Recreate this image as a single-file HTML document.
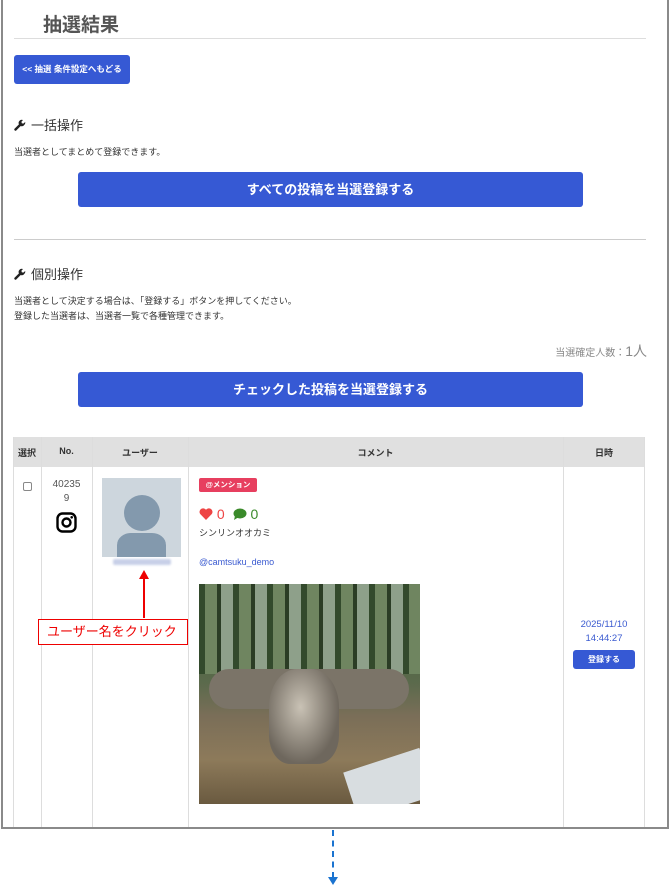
<!DOCTYPE html>
<html><head><meta charset="utf-8"><style>
*{box-sizing:border-box;margin:0;padding:0}
body{width:670px;height:896px;background:#fff;font-family:"Liberation Sans","Noto Sans CJK JP",sans-serif;color:#333;position:relative;overflow:hidden}
.frame{position:absolute;left:1px;top:-2px;width:668px;height:831px;border:2px solid #8a8a8a;overflow:hidden}
.in{position:absolute;left:-3px;top:0;width:668px;height:831px}
.abs{position:absolute}
.btn{background:#3659d4;color:#fff;border-radius:3px;text-align:center;font-weight:bold}
.t{font-size:9px;color:#333}
.vl{position:absolute;background:#ddd;width:1px}
</style></head><body>
<div class="frame"><div class="in">
 <div class="abs" style="left:43px;top:10px;font-size:19px;font-weight:bold;color:#555">抽選結果</div>
 <div class="abs" style="left:14px;top:38px;width:632px;height:1px;background:#ddd"></div>
 <div class="abs btn" style="left:14px;top:55px;width:116px;height:29px;line-height:29px;font-size:8.5px">&lt;&lt; 抽選 条件設定へもどる</div>
 <div class="abs" style="left:14px;top:115px;font-size:13px;color:#333"><svg width="12" height="12" viewBox="0 0 12 12" style="vertical-align:-1px;margin-right:5px"><path d="M1.5 10.5 L6 6" stroke="#222" stroke-width="2.4" stroke-linecap="round"/><path d="M5 5.5 A3.2 3.2 0 0 0 9.5 6.8 L11 5 A3.2 3.2 0 0 0 11.2 3 L9.3 4.6 L7.8 4.2 L7.4 2.7 L9 1 A3.2 3.2 0 0 0 5 5.5Z" fill="#222"/></svg>一括操作</div>
 <div class="abs t" style="left:14px;top:145px">当選者としてまとめて登録できます。</div>
 <div class="abs btn" style="left:78px;top:172px;width:505px;height:35px;line-height:35px;font-size:13px">すべての投稿を当選登録する</div>
 <div class="abs" style="left:14px;top:239px;width:632px;height:1px;background:#ccc"></div>
 <div class="abs" style="left:14px;top:264px;font-size:13px;color:#333"><svg width="12" height="12" viewBox="0 0 12 12" style="vertical-align:-1px;margin-right:5px"><path d="M1.5 10.5 L6 6" stroke="#222" stroke-width="2.4" stroke-linecap="round"/><path d="M5 5.5 A3.2 3.2 0 0 0 9.5 6.8 L11 5 A3.2 3.2 0 0 0 11.2 3 L9.3 4.6 L7.8 4.2 L7.4 2.7 L9 1 A3.2 3.2 0 0 0 5 5.5Z" fill="#222"/></svg>個別操作</div>
 <div class="abs t" style="left:14px;top:294px;line-height:15px">当選者として決定する場合は、「登録する」ボタンを押してください。<br>登録した当選者は、当選者一覧で各種管理できます。</div>
 <div class="abs" style="right:21px;top:341px;font-size:10px;color:#888">当選確定人数：<span style="font-size:14px">1人</span></div>
 <div class="abs btn" style="left:78px;top:372px;width:505px;height:35px;line-height:35px;font-size:13px">チェックした投稿を当選登録する</div>
 <div class="abs" style="left:13px;top:437px;width:632px;height:30px;background:#e0e0e0"></div>
 <div class="abs" style="left:13px;top:437px;width:632px;height:400px;border-left:1px solid #ddd;border-right:1px solid #ddd"></div>
 <div class="vl" style="left:41px;top:437px;height:400px"></div>
 <div class="vl" style="left:92px;top:437px;height:400px"></div>
 <div class="vl" style="left:188px;top:437px;height:400px"></div>
 <div class="vl" style="left:563px;top:437px;height:400px"></div>
 <div class="abs" style="left:13px;top:446px;width:28px;text-align:center;font-size:9px;font-weight:bold">選択</div>
 <div class="abs" style="left:41px;top:446px;width:51px;text-align:center;font-size:9px;font-weight:bold">No.</div>
 <div class="abs" style="left:92px;top:446px;width:96px;text-align:center;font-size:9px;font-weight:bold">ユーザー</div>
 <div class="abs" style="left:188px;top:446px;width:375px;text-align:center;font-size:9px;font-weight:bold">コメント</div>
 <div class="abs" style="left:563px;top:446px;width:82px;text-align:center;font-size:9px;font-weight:bold">日時</div>
 <div class="abs" style="left:23px;top:482px;width:9px;height:9px;border:1px solid #888;border-radius:2px"></div>
 <div class="abs" style="left:41px;top:478px;width:51px;text-align:center;font-size:10px;color:#555;line-height:14px">40235<br>9</div>
 <svg class="abs" style="left:56px;top:512px" width="21" height="21" viewBox="0 0 21 21"><rect x="1.5" y="1.5" width="18" height="18" rx="5" fill="none" stroke="#000" stroke-width="2.4"/><circle cx="10.5" cy="10.5" r="4" fill="none" stroke="#000" stroke-width="2.4"/><circle cx="15.7" cy="5.3" r="1.3"/></svg>
 <div class="abs" style="left:102px;top:478px;width:79px;height:79px;background:#cdd6dd;overflow:hidden"><div class="abs" style="left:22px;top:17px;width:36px;height:36px;border-radius:50%;background:#8399ad"></div><div class="abs" style="left:15px;top:53px;width:49px;height:40px;border-radius:14px 14px 0 0;background:#8399ad;border-top:2px solid #cdd6dd"></div></div>
 <div class="abs" style="left:113px;top:559px;width:58px;height:6px;background:#c8d0e8;border-radius:2px;filter:blur(1px)"></div>
 <div class="abs" style="left:143px;top:575px;width:2px;height:43px;background:#e00"></div>
 <div class="abs" style="left:139px;top:570px;width:0;height:0;border-left:5px solid transparent;border-right:5px solid transparent;border-bottom:9px solid #e00"></div>
 <div class="abs" style="left:38px;top:619px;width:150px;height:26px;border:1px solid #e00;background:#fff;color:#e00;font-size:13px;line-height:24px;padding-left:8px">ユーザー名をクリック</div>
 <div class="abs" style="left:199px;top:478px;width:58px;height:14px;background:#e73f5f;border-radius:2px;color:#fff;font-size:7.5px;font-weight:bold;text-align:center;line-height:14px">@メンション</div>
 <div class="abs" style="left:199px;top:506px;font-size:14px;color:#e44"><svg width="14" height="12" viewBox="0 0 14 12" style="vertical-align:-1px"><path d="M7 12 L1.2 6 A3.3 3.3 0 0 1 7 1.8 A3.3 3.3 0 0 1 12.8 6Z" fill="#e44"/></svg> 0 <svg width="14" height="12" viewBox="0 0 14 12" style="vertical-align:-1px;margin-left:4px"><ellipse cx="7" cy="5.5" rx="6.5" ry="5" fill="#3a8a2a"/><path d="M2 8 L1 12 L5 9.5Z" fill="#3a8a2a"/></svg><span style="color:#3a8a2a"> 0</span></div>
 <div class="abs t" style="left:199px;top:526px">シンリンオオカミ</div>
 <div class="abs" style="left:199px;top:557px;font-size:9px;color:#3a5ad0">@camtsuku_demo</div>
 <div class="abs" style="left:199px;top:584px;width:221px;height:220px;overflow:hidden;background:linear-gradient(180deg,#9fb09a 0%,#4e6340 25%,#5b6a4c 45%,#7a6e58 60%,#8d7a5a 80%,#6a5a40 100%)">
  <div class="abs" style="left:0;top:0;width:221px;height:90px;background:repeating-linear-gradient(90deg,#334a2c 0 6px,#6f8560 6px 18px,#2b3d25 18px 22px,#8ea08a 22px 34px)"></div>
  <div class="abs" style="left:10px;top:85px;width:200px;height:40px;background:#7b7468;border-radius:20px"></div>
  <div class="abs" style="left:70px;top:85px;width:70px;height:95px;background:radial-gradient(ellipse at 45% 40%,#c9c2b5,#6e675d 70%);border-radius:40% 40% 30% 30%"></div>
  <div class="abs" style="left:150px;top:175px;width:80px;height:50px;background:#d8dde0;transform:rotate(-18deg)"></div>
 </div>
 <div class="abs" style="left:563px;top:618px;width:82px;text-align:center;font-size:9.5px;color:#3a5ad0;line-height:14px">2025/11/10<br>14:44:27</div>
 <div class="abs btn" style="left:573px;top:650px;width:62px;height:19px;line-height:19px;font-size:8px">登録する</div>
</div></div>
<div class="abs" style="left:332px;top:830px;width:0;height:48px;border-left:2px dashed #1a73d0"></div>
<div class="abs" style="left:328px;top:877px;width:0;height:0;border-left:5px solid transparent;border-right:5px solid transparent;border-top:8px solid #1a73d0"></div>
</body></html>
